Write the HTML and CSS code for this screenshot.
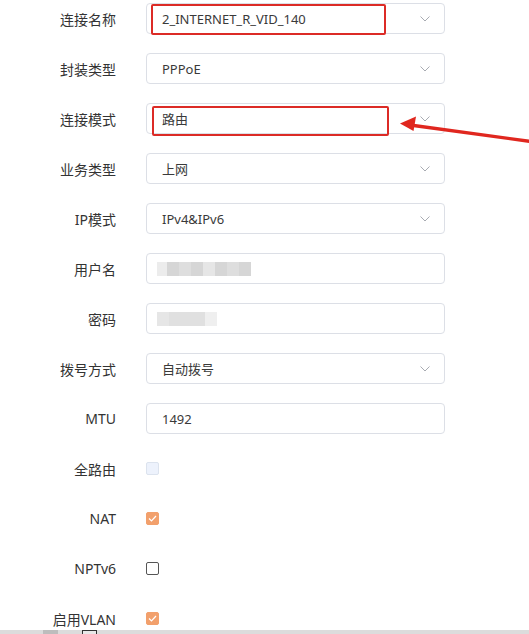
FILE: index.html
```html
<!DOCTYPE html>
<html lang="zh">
<head>
<meta charset="utf-8">
<link rel="stylesheet" href="styles.css">
</head>
<body>
<div class="page">
  <form class="form">
    <div class="row">
      <label class="label">连接名称</label>
      <div class="field select">
        <span class="value">2_INTERNET_R_VID_140</span>
        <svg class="chev" width="10" height="6" viewBox="0 0 10 6"><path d="M0.5 0.5 L5 5 L9.5 0.5" fill="none" stroke="#a8abb2" stroke-width="1"/></svg>
        <span class="mark mark1"></span>
      </div>
    </div>
    <div class="row">
      <label class="label">封装类型</label>
      <div class="field select">
        <span class="value">PPPoE</span>
        <svg class="chev" width="10" height="6" viewBox="0 0 10 6"><path d="M0.5 0.5 L5 5 L9.5 0.5" fill="none" stroke="#a8abb2" stroke-width="1"/></svg>
      </div>
    </div>
    <div class="row">
      <label class="label">连接模式</label>
      <div class="field select">
        <span class="value">路由</span>
        <svg class="chev" width="10" height="6" viewBox="0 0 10 6"><path d="M0.5 0.5 L5 5 L9.5 0.5" fill="none" stroke="#a8abb2" stroke-width="1"/></svg>
        <span class="mark mark2"></span>
      </div>
    </div>
    <div class="row">
      <label class="label">业务类型</label>
      <div class="field select">
        <span class="value">上网</span>
        <svg class="chev" width="10" height="6" viewBox="0 0 10 6"><path d="M0.5 0.5 L5 5 L9.5 0.5" fill="none" stroke="#a8abb2" stroke-width="1"/></svg>
      </div>
    </div>
    <div class="row">
      <label class="label">IP模式</label>
      <div class="field select">
        <span class="value">IPv4&amp;IPv6</span>
        <svg class="chev" width="10" height="6" viewBox="0 0 10 6"><path d="M0.5 0.5 L5 5 L9.5 0.5" fill="none" stroke="#a8abb2" stroke-width="1"/></svg>
      </div>
    </div>
    <div class="row">
      <label class="label">用户名</label>
      <div class="field">
        <span class="blur blur-user">
          <i class="px p1"></i><i class="px p2"></i><i class="px p3"></i><i class="px p2"></i><i class="px p4"></i><i class="px p2"></i><i class="px p3"></i><i class="px p2"></i>
        </span>
      </div>
    </div>
    <div class="row">
      <label class="label">密码</label>
      <div class="field">
        <span class="blur blur-pass">
          <i class="px p4"></i><i class="px p5"></i><i class="px p6"></i>
        </span>
      </div>
    </div>
    <div class="row">
      <label class="label">拨号方式</label>
      <div class="field select">
        <span class="value">自动拨号</span>
        <svg class="chev" width="10" height="6" viewBox="0 0 10 6"><path d="M0.5 0.5 L5 5 L9.5 0.5" fill="none" stroke="#a8abb2" stroke-width="1"/></svg>
      </div>
    </div>
    <div class="row">
      <label class="label">MTU</label>
      <div class="field">
        <span class="value">1492</span>
      </div>
    </div>
    <div class="row">
      <label class="label">全路由</label>
      <span class="check disabled"></span>
    </div>
    <div class="row">
      <label class="label">NAT</label>
      <span class="check checked"><svg width="9" height="7" viewBox="0 0 9 7"><path d="M1 3.5 L3.5 6 L8 1" fill="none" stroke="#fff" stroke-width="1.2"/></svg></span>
    </div>
    <div class="row">
      <label class="label">NPTv6</label>
      <span class="check"></span>
    </div>
    <div class="row">
      <label class="label">启用VLAN</label>
      <span class="check checked"><svg width="9" height="7" viewBox="0 0 9 7"><path d="M1 3.5 L3.5 6 L8 1" fill="none" stroke="#fff" stroke-width="1.2"/></svg></span>
    </div>
  </form>
  <svg class="arrow" width="529" height="634" viewBox="0 0 529 634">
    <line x1="531" y1="141.5" x2="410" y2="125" stroke="#e0271f" stroke-width="3.4" stroke-linecap="round"/>
    <polygon points="400,123.5 416,116.5 413.5,131" fill="#e0271f"/>
  </svg>
  <div class="hbar"><span class="hb-thumb"></span><span class="hb-box"></span></div>
</div>
</body>
</html>
```
FILE: styles.css
```css
html, body {
  margin: 0;
  padding: 0;
  background: #fff;
}
.page {
  position: relative;
  width: 529px;
  height: 634px;
  overflow: hidden;
  font-family: "Noto Sans", "Noto Sans CJK SC", sans-serif;
  font-size: 14px;
  color: #333;
}
.form {
  display: flex;
  flex-direction: column;
  gap: 19px;
  padding-top: 3px;
}
.row {
  display: flex;
  align-items: center;
  height: 31px;
}
.label {
  width: 116px;
  text-align: right;
  margin-right: 30px;
  color: #333;
  white-space: nowrap;
}
.field {
  position: relative;
  box-sizing: border-box;
  width: 299px;
  height: 31px;
  border: 1px solid #dcdfe6;
  border-radius: 4px;
  display: flex;
  align-items: center;
  padding: 0 14px 0 15px;
  font-size: 13px;
}
.value {
  flex: 1;
  color: #3a3a3a;
  white-space: nowrap;
}
.chev {
  display: block;
  margin-top: 1px;
}
.mark {
  position: absolute;
  border: 2.5px solid #dc2b26;
  border-radius: 2px;
  box-sizing: border-box;
}
.mark1 {
  left: 4px;
  top: 0px;
  width: 235px;
  height: 31px;
}
.mark2 {
  left: 5px;
  top: 2px;
  width: 237px;
  height: 30px;
}
.blur {
  display: flex;
  height: 14px;
  filter: blur(0.6px);
}
.px {
  display: block;
  height: 14px;
  width: 12px;
}
.blur-user { margin-left: -5px; margin-top: 1px; }
.blur-pass { margin-left: -5px; margin-top: 1px; }
.p1 { background: #ececec; width: 10px; }
.p2 { background: #d6d6d6; }
.p3 { background: #dedede; }
.p4 { background: #e6e6e6; width: 12px; }
.p5 { background: #e0e0e0; width: 36px; }
.p6 { background: #efefef; width: 12px; }
.check {
  box-sizing: border-box;
  width: 13px;
  height: 13px;
  border: 1px solid #555;
  border-radius: 2px;
  background: #fff;
  display: flex;
  align-items: center;
  justify-content: center;
}
.check.disabled {
  background: #edf2fc;
  border-color: #dce3ee;
}
.check.checked {
  background: #f2a06c;
  border-color: #f2a06c;
}
.arrow {
  position: absolute;
  left: 0;
  top: 0;
  pointer-events: none;
}
.hbar {
  position: absolute;
  left: 0;
  right: 0;
  bottom: 0;
  height: 4px;
  background: #dcdcdc;
}
.hb-thumb {
  position: absolute;
  left: 43px;
  width: 15px;
  top: 0;
  height: 4px;
  background: #bdbdbd;
}
.hb-box {
  position: absolute;
  left: 82px;
  width: 15px;
  top: 0;
  height: 5px;
  box-sizing: border-box;
  border: 1px solid #333;
  background: #e8e8e8;
}
```
